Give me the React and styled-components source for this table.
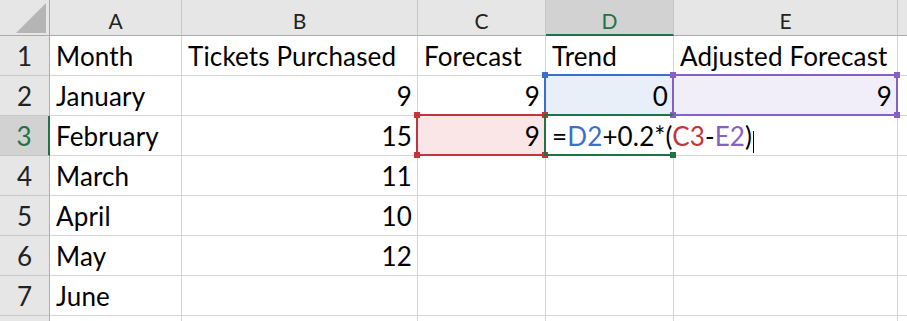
import React from "react";
import styled, { createGlobalStyle, css } from "styled-components";

const Global = createGlobalStyle`
  html, body { margin: 0; padding: 0; background: #ffffff; overflow: hidden; }
  body { font-family: "Lato", "Liberation Sans", sans-serif; }
`;

const GREEN = "#217346";
const GRID = "#d4d4d4";
const HEAD_LINE = "#ababab";

const Sheet = styled.div`
  display: grid;
  grid-template-columns: 50px 132px 236px 128px 128px 224px 60px;
  grid-template-rows: 36px;
  grid-auto-rows: 40px;
  width: 907px;
  height: 321px;
  overflow: hidden;
  color: #000;
`;

const Corner = styled.div`
  grid-row: 1;
  grid-column: 1;
  background: #e6e6e6;
  border-right: 1px solid ${HEAD_LINE};
  border-bottom: 1px solid ${HEAD_LINE};
  box-sizing: border-box;
  display: flex;
  align-items: flex-end;
  justify-content: flex-end;
  padding: 0 3px 2px 0;
`;

const ColHead = styled.div`
  grid-row: 1;
  grid-column: ${(p) => p.$c};
  box-sizing: border-box;
  background: ${(p) => (p.$active ? "#d2d2d2" : "#e6e6e6")};
  color: ${(p) => (p.$active ? GREEN : "#222")};
  border-right: 1px solid #c6c6c6;
  border-bottom: ${(p) => (p.$active ? `2px solid ${GREEN}` : `1px solid ${HEAD_LINE}`)};
  font-size: 21px;
  line-height: 30px;
  padding-top: 6px;
  text-align: center;
`;

const RowHead = styled.div`
  grid-row: ${(p) => p.$r};
  grid-column: 1;
  box-sizing: border-box;
  background: ${(p) => (p.$active ? "#d2d2d2" : "#e6e6e6")};
  color: ${(p) => (p.$active ? GREEN : "#222")};
  border-right: ${(p) => (p.$active ? `2px solid ${GREEN}` : `1px solid ${HEAD_LINE}`)};
  border-bottom: 1px solid #c6c6c6;
  font-size: 26px;
  line-height: 40px;
  text-align: center;
`;

const Cell = styled.div`
  grid-row: ${(p) => p.$r};
  grid-column: ${(p) => p.$c};
  box-sizing: border-box;
  border-right: ${(p) => (p.$noRight ? "1px solid transparent" : `1px solid ${GRID}`)};
  border-bottom: 1px solid ${GRID};
  background: ${(p) => p.$fill || "transparent"};
  font-size: 26px;
  letter-spacing: 0.15px;
  line-height: 40px;
  padding: 0 5px 0 6px;
  white-space: nowrap;
  overflow: visible;
  text-align: ${(p) => (p.$num ? "right" : "left")};
`;

const RangeBox = styled.div`
  grid-row: ${(p) => p.$row};
  grid-column: ${(p) => p.$col};
  position: relative;
  z-index: ${(p) => p.$z || 1};
  margin: -2px 0 0 -2px;
  border: 2px solid ${(p) => p.$color};
  pointer-events: none;
  ${(p) =>
    p.$open &&
    css`
      border-right-color: transparent;
    `}
`;

const Handle = styled.span`
  position: absolute;
  width: 6px;
  height: 6px;
  background: ${(p) => p.$color};
  ${(p) => (p.$top ? "top: -4px;" : "bottom: -4px;")}
  ${(p) => (p.$left ? "left: -4px;" : "right: -4px;")}
`;

const Ref = styled.span`
  color: ${(p) => p.$color};
`;

const Caret = styled.span`
  display: inline-block;
  width: 1px;
  height: 22px;
  background: #000;
  vertical-align: -7px;
  margin-left: 1px;
`;

const BLUE = "#3b6fcb";
const RED = "#c4343c";
const PURPLE = "#8661c5";

const cols = ["A", "B", "C", "D", "E", ""];

const rows = [
  ["Month", "Tickets Purchased", "Forecast", "Trend", "Adjusted Forecast", ""],
  ["January", 9, 9, 0, 9, ""],
  ["February", 15, 9, "formula", "", ""],
  ["March", 11, "", "", "", ""],
  ["April", 10, "", "", "", ""],
  ["May", 12, "", "", "", ""],
  ["June", "", "", "", "", ""],
  ["", "", "", "", "", ""],
];

const fills = {
  "1-3": "#e8eff9",
  "1-4": "#f1eef9",
  "2-2": "#fbe6e7",
};

function Box({ row, col, color, open, z, corners }) {
  return (
    <RangeBox $row={row} $col={col} $color={color} $open={open} $z={z}>
      {corners.map((c) => (
        <Handle
          key={c}
          $color={c === "br" && open ? GREEN : color}
          $top={c[0] === "t"}
          $left={c[1] === "l"}
        />
      ))}
    </RangeBox>
  );
}

export default function App() {
  return (
    <>
      <Global />
      <Sheet>
        <Corner>
          <svg width="30" height="30" viewBox="0 0 30 30">
            <polygon points="30,0 30,30 0,30" fill="#b5b5b5" />
          </svg>
        </Corner>
        {cols.map((c, i) => (
          <ColHead key={i} $c={i + 2} $active={c === "D"}>
            {c}
          </ColHead>
        ))}
        {rows.map((r, ri) => (
          <React.Fragment key={ri}>
            <RowHead $r={ri + 2} $active={ri === 2}>
              {ri < 7 ? ri + 1 : ""}
            </RowHead>
            {r.map((v, ci) => {
              const num = typeof v === "number";
              if (v === "formula") {
                return (
                  <Cell key={ci} $r={ri + 2} $c={ci + 2} $noRight>
                    =<Ref $color={BLUE}>D2</Ref>+0.2*(
                    <Ref $color={RED}>C3</Ref>-<Ref $color={PURPLE}>E2</Ref>)
                    <Caret />
                  </Cell>
                );
              }
              return (
                <Cell key={ci} $r={ri + 2} $c={ci + 2} $num={num} $fill={fills[`${ri}-${ci}`]}>
                  {v}
                </Cell>
              );
            })}
          </React.Fragment>
        ))}
        <Box row={3} col={5} color={BLUE} corners={["tl", "tr", "bl", "br"]} />
        <Box row={3} col={6} color={PURPLE} z={2} corners={["tl", "tr", "bl", "br"]} />
        <Box row={4} col={4} color={RED} z={2} corners={["tl", "tr", "bl", "br"]} />
        <Box row={4} col={5} color={GREEN} z={3} open corners={["br"]} />
      </Sheet>
    </>
  );
}
